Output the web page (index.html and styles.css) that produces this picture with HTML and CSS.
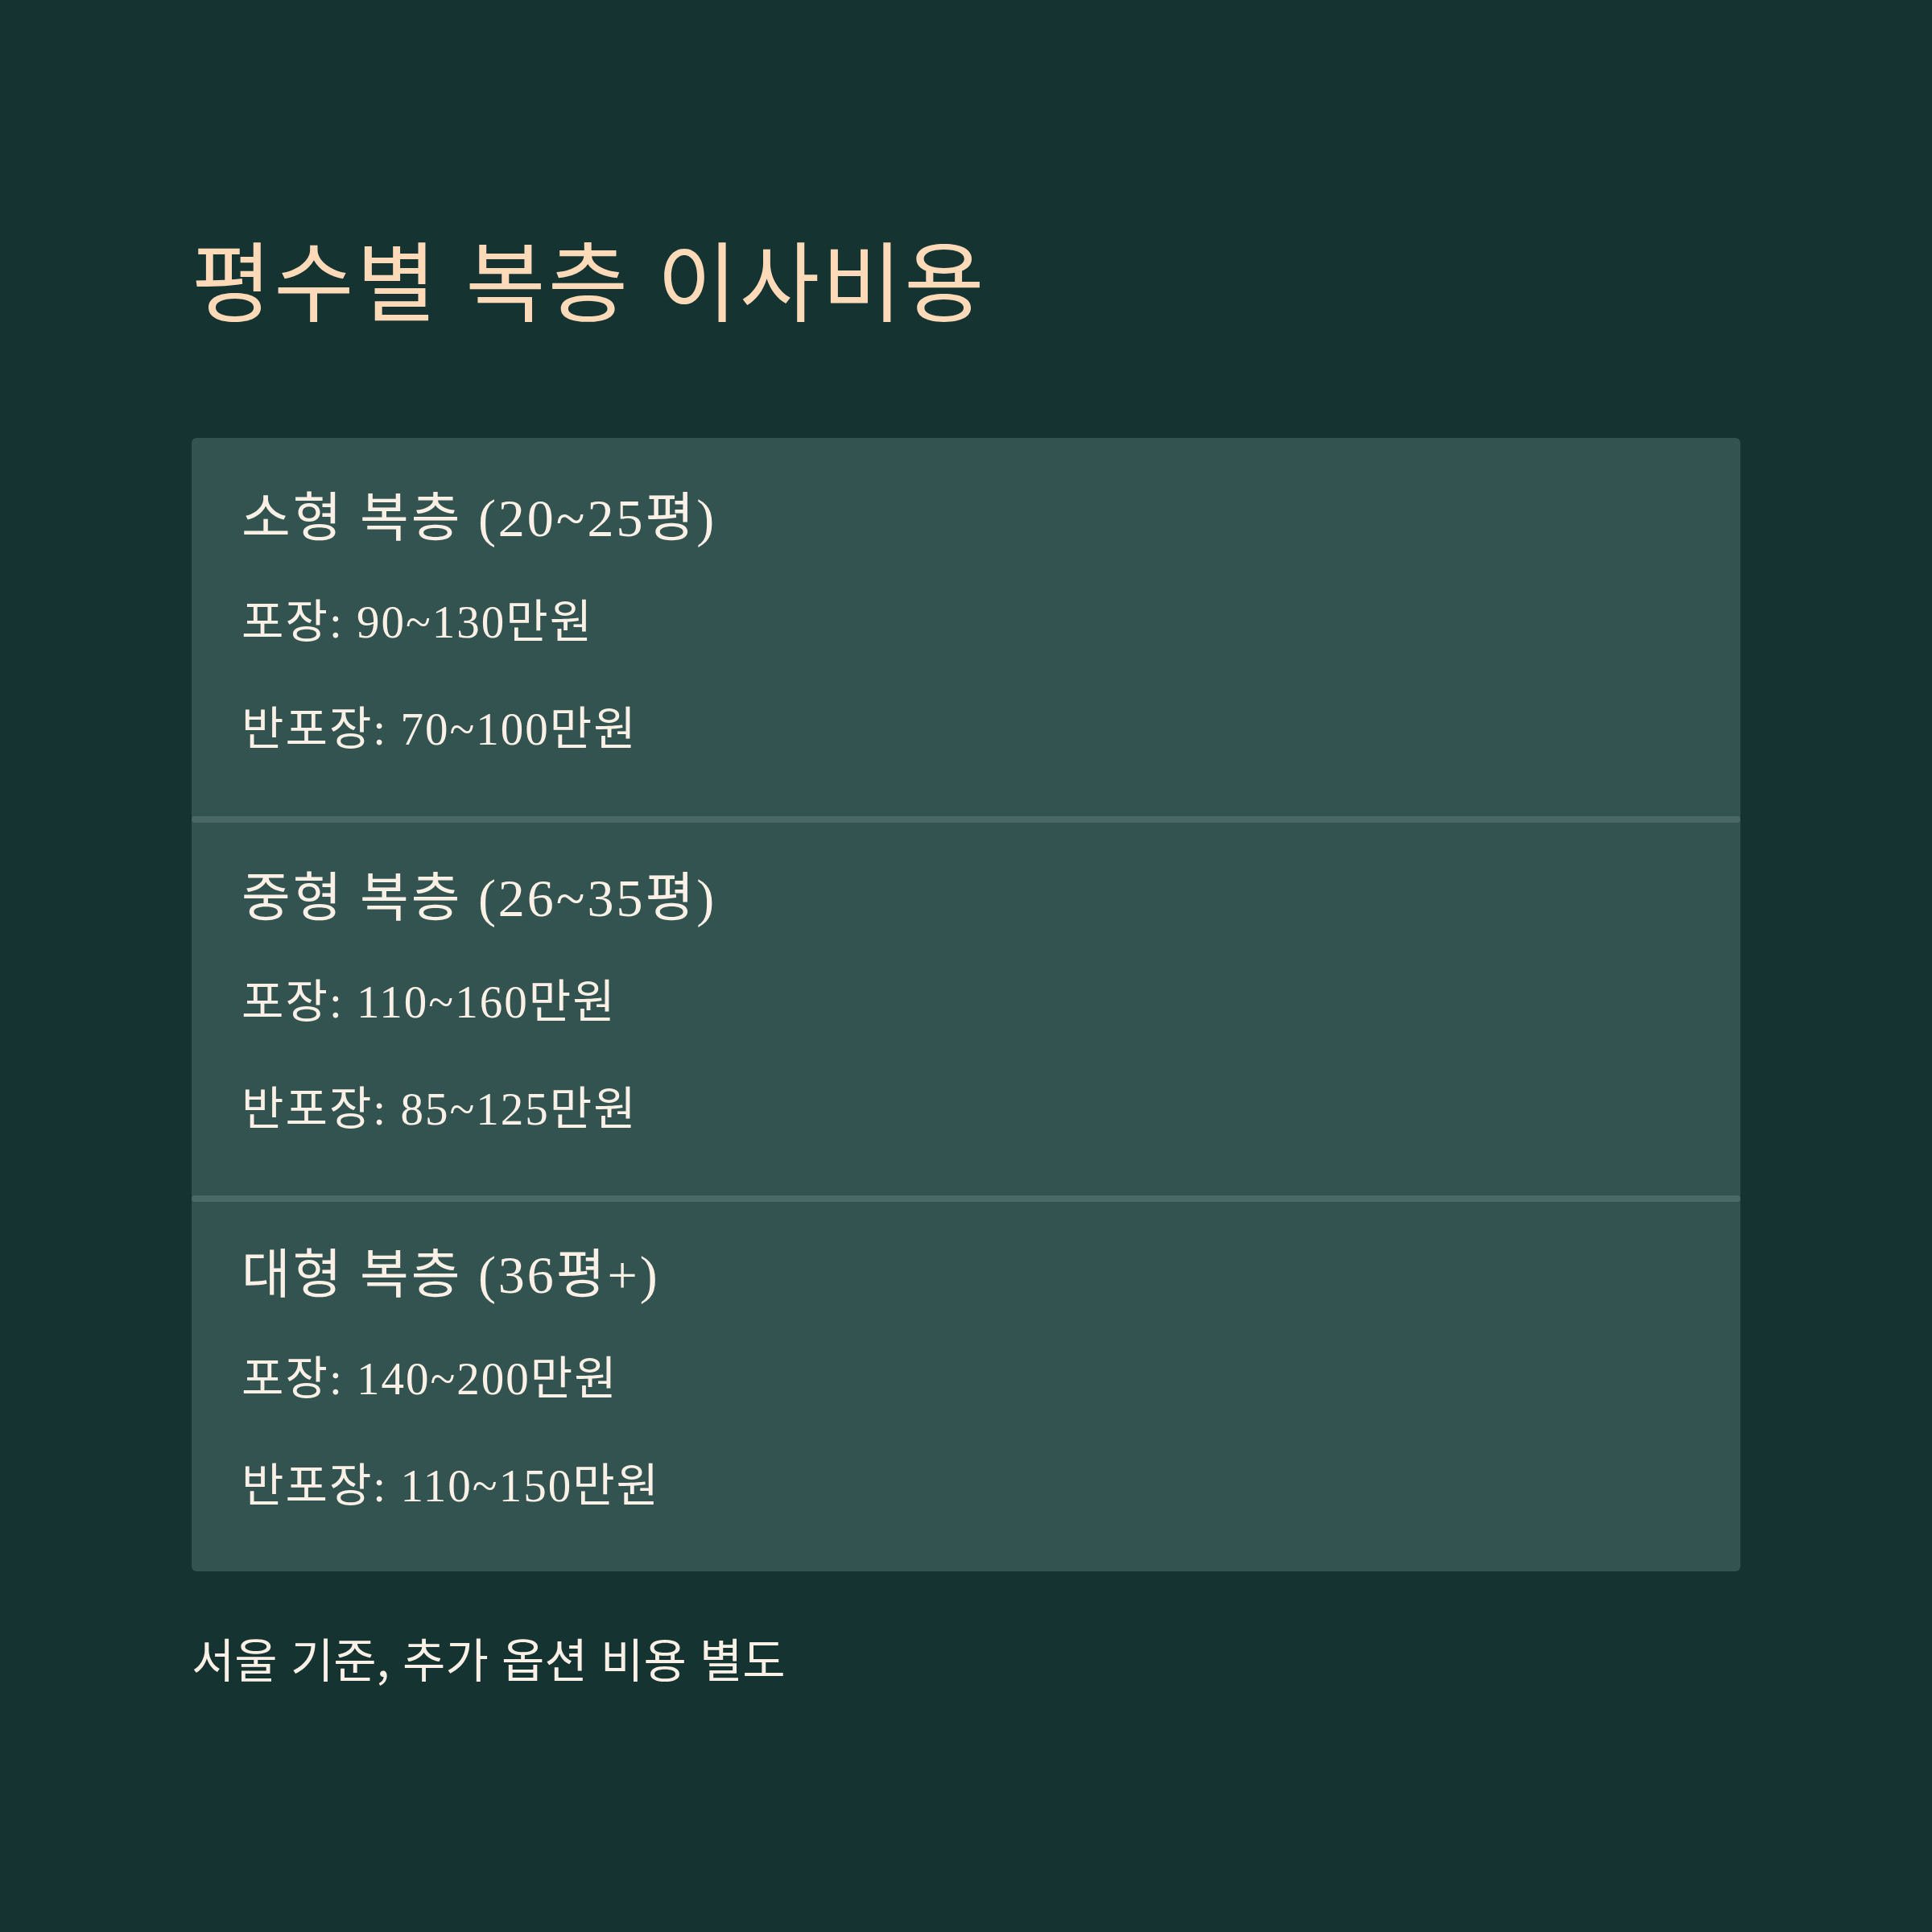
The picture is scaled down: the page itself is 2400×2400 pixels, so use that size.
FILE: index.html
```html
<!DOCTYPE html>
<html lang="ko">
<head>
<meta charset="utf-8">
<title>평수별 복층 이사비용</title>
<link rel="stylesheet" href="styles.css">
</head>
<body>
<main class="page">
  <h1 class="title">평수별 복층 이사비용</h1>
  <section class="card">
    <div class="tier">
      <h2 class="tier-name">소형 복층 (20~25평)</h2>
      <p class="price">포장: 90~130만원</p>
      <p class="price">반포장: 70~100만원</p>
    </div>
    <div class="divider"></div>
    <div class="tier">
      <h2 class="tier-name">중형 복층 (26~35평)</h2>
      <p class="price">포장: 110~160만원</p>
      <p class="price">반포장: 85~125만원</p>
    </div>
    <div class="divider"></div>
    <div class="tier">
      <h2 class="tier-name">대형 복층 (36평+)</h2>
      <p class="price">포장: 140~200만원</p>
      <p class="price">반포장: 110~150만원</p>
    </div>
  </section>
  <p class="note">서울 기준, 추가 옵션 비용 별도</p>
</main>
</body>
</html>
```
FILE: styles.css
```css
html, body {
  margin: 0;
  padding: 0;
  background: #143331;
}

body {
  font-family: "Liberation Serif", "Noto Sans CJK KR", serif;
  color: #faf0e6;
}

.page {
  padding: 279px 238px 0;
  display: flex;
  flex-direction: column;
}

.title {
  margin: 0;
  font-family: "Noto Sans CJK KR", sans-serif;
  font-weight: 400;
  font-size: 108px;
  line-height: 130px;
  letter-spacing: 3px;
  color: #ffdab9;
}

.card {
  margin-top: 135px;
  background: #325350;
  border-radius: 6px;
  display: flex;
  flex-direction: column;
}

.tier {
  padding: 57px 62px 65px;
  display: flex;
  flex-direction: column;
}

.tier:first-child {
  padding-bottom: 71px;
}

.tier:nth-child(3) {
  padding-top: 51px;
  padding-bottom: 70px;
}

.tier:last-child {
  padding-top: 48px;
  padding-bottom: 69px;
}

.tier-name {
  margin: 0;
  font-weight: 400;
  font-size: 66px;
  line-height: 86px;
  letter-spacing: 3px;
}

.price {
  margin: 0;
  font-size: 57px;
  line-height: 74px;
  letter-spacing: 2px;
}

.tier-name + .price {
  margin-top: 49px;
}

.price + .price {
  margin-top: 59px;
}

.divider {
  height: 8px;
  border-radius: 4px;
  background: #4a6866;
}

.note {
  margin: 70px 0 0;
  font-family: "Noto Sans CJK KR", sans-serif;
  font-size: 58px;
  line-height: 75px;
}
```
